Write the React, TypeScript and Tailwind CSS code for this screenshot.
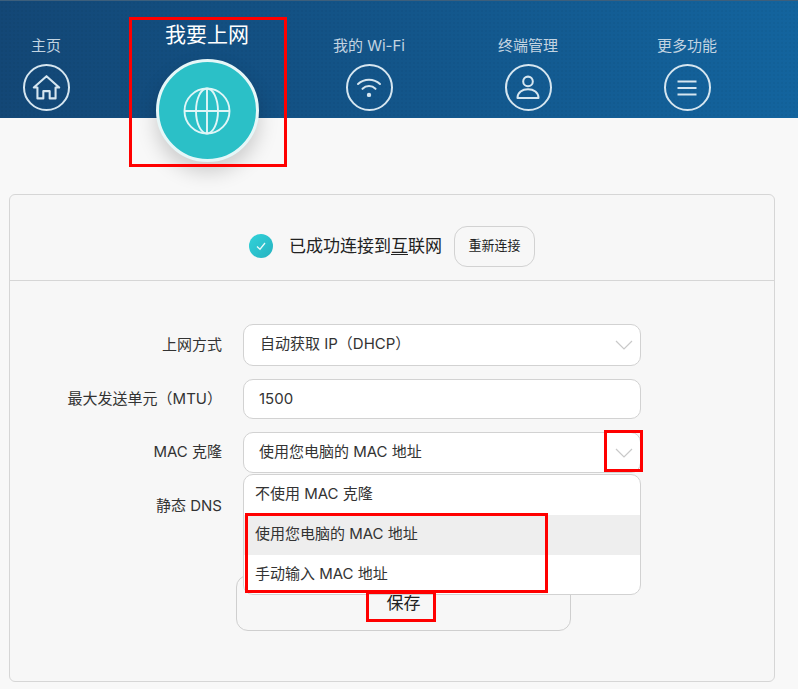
import React from "react";

const stroke = "#d6e6f0";

function HomeIcon() {
  return (
    <svg viewBox="0 0 32 32" className="w-[29px] h-[29px]" fill="none" stroke={stroke} strokeWidth="2.3" strokeLinejoin="round" strokeLinecap="round">
      <path d="M2 16 L16 3.5 L30 16 L26 16 V28 H19.5 V20 H12.5 V28 H6 V16 Z" />
    </svg>
  );
}
function WifiIcon() {
  return (
    <svg viewBox="0 0 32 32" className="w-[26px] h-[26px]" fill="none" stroke={stroke} strokeWidth="2.5" strokeLinecap="round">
      <path d="M2.5 11 C10 4 22 4 29.5 11" />
      <path d="M8 17 C12.5 12.5 19.5 12.5 24 17" />
      <circle cx="16" cy="24.5" r="2.7" fill={stroke} stroke="none" />
    </svg>
  );
}
function UserIcon() {
  return (
    <svg viewBox="0 0 32 32" className="w-[28px] h-[28px]" fill="none" stroke={stroke} strokeWidth="2.3">
      <circle cx="16" cy="8.5" r="5.5" />
      <path d="M4 27.5 C4 21 9.5 17.5 16 17.5 C22.5 17.5 28 21 28 27.5 Z" strokeLinejoin="round" />
    </svg>
  );
}
function MenuIcon() {
  return (
    <svg viewBox="0 0 20 20" className="w-[20px] h-[20px]" fill="none" stroke={stroke} strokeWidth="2">
      <path d="M0.5 3.5 H19.5 M0.5 10 H19.5 M0.5 16.5 H19.5" />
    </svg>
  );
}
function GlobeIcon() {
  return (
    <svg viewBox="0 0 48 48" className="w-[48px] h-[48px]" fill="none" stroke="#e0f6f7" strokeWidth="1.9">
      <circle cx="24" cy="24" r="22.5" />
      <ellipse cx="24" cy="24" rx="11" ry="22.5" />
      <path d="M24 1.5 V46.5 M1.5 24 H46.5" />
    </svg>
  );
}
function Chevron() {
  return (
    <svg viewBox="0 0 18 10" className="w-[18px] h-[10px]" fill="none" stroke="#c9c9c9" strokeWidth="1.2">
      <path d="M1 1 L9 9 L17 1" />
    </svg>
  );
}

function Row({ label, children }: { label: string; children: React.ReactNode }) {
  return (
    <div className="flex items-center">
      <div className="w-[212px] text-right text-[15px] leading-[20px] pb-[1px] text-[#333] whitespace-nowrap">{label}</div>
      <div className="ml-[21px] w-[398px]">{children}</div>
    </div>
  );
}

const fieldBase = "w-full bg-white border border-[#d2d2d2] rounded-[10px] flex items-center justify-between text-[15px] text-[#333]";
const ring = "mt-[8px] w-[47px] h-[47px] rounded-full border-2 border-[#d6e6f0] flex items-center justify-center";

export default function App() {
  return (
    <div className="relative w-[798px] h-[689px] overflow-hidden bg-[#f8f8f8] font-['Inter','Noto_Sans_CJK_SC',sans-serif]">
      <header className="relative h-[118px] flex border-t border-[#3d5f7c] [background-image:radial-gradient(rgba(0,0,0,0.03)_1px,transparent_1px),linear-gradient(to_right,#134776,#13649e)] [background-size:4px_4px,100%_100%]">
        <div className="w-[92px] flex flex-col items-center pt-[35px]">
          <div className="text-[15px] leading-[20px] text-[#c3d4e1]">主页</div>
          <div className={ring}><HomeIcon /></div>
        </div>
        <div className="ml-[63px] w-[104px] flex flex-col items-center pt-[20px]">
          <div className="text-[21px] leading-[28px] text-white whitespace-nowrap">我要上网</div>
          <div className="mt-[10px] shrink-0 w-[103px] h-[103px] rounded-full bg-[#2bc0c7] border-[3px] border-[#e6f7f8] flex items-center justify-center shadow-[0_10px_20px_rgba(0,0,0,0.18)]">
            <GlobeIcon />
          </div>
        </div>
        <div className="ml-[58px] w-[104px] flex flex-col items-center pt-[35px]">
          <div className="text-[15px] leading-[20px] text-[#c3d4e1] whitespace-nowrap">我的 Wi-Fi</div>
          <div className={ring}><WifiIcon /></div>
        </div>
        <div className="ml-[55px] w-[104px] flex flex-col items-center pt-[35px]">
          <div className="text-[15px] leading-[20px] text-[#c3d4e1] whitespace-nowrap">终端管理</div>
          <div className={ring}><UserIcon /></div>
        </div>
        <div className="ml-[55px] w-[104px] flex flex-col items-center pt-[35px]">
          <div className="text-[15px] leading-[20px] text-[#c3d4e1] whitespace-nowrap">更多功能</div>
          <div className={ring}><MenuIcon /></div>
        </div>
      </header>

      <main className="pt-[76px] pl-[9px]">
        <section className="w-[766px] h-[488px] border border-[#d6d6d6] rounded-[6px] bg-[#f7f7f7]">
          <div className="h-[86px] border-b border-[#d6d6d6] flex items-center justify-center pt-[25px] pb-[8px]">
            <div className="w-[24px] h-[24px] rounded-full bg-gradient-to-br from-[#31d3da] to-[#27b2c0] flex items-center justify-center">
              <svg viewBox="0 0 12 12" className="w-[12px] h-[12px]" fill="none" stroke="#e8fafa" strokeWidth="1.3"><path d="M2 6.5 L5 9.2 L10 3" /></svg>
            </div>
            <div className="ml-[16px] text-[17px] leading-[24px] text-[#222] whitespace-nowrap">已成功连接到<span className="underline underline-offset-2">互</span>联网</div>
            <button className="ml-[12px] w-[81px] h-[41px] border border-[#d2d2d2] rounded-[13px] text-[13px] text-[#222]">重新连接</button>
          </div>

          <div className="pt-[43px] flex flex-col gap-[13px]">
            <Row label="上网方式">
              <div className={`${fieldBase} h-[42px] pl-[16px] pr-[7px]`}>
                <span className="pb-[1px]">自动获取 IP（DHCP）</span>
                <Chevron />
              </div>
            </Row>
            <Row label="最大发送单元（MTU）">
              <div className={`${fieldBase} h-[40px] pl-[15px]`}>1500</div>
            </Row>
            <Row label="MAC 克隆">
              <div className={`${fieldBase} h-[41px] pl-[15px] pr-[7px]`}>
                <span className="pb-[1px]">使用您电脑的 MAC 地址</span>
                <Chevron />
              </div>
            </Row>
            <Row label="静态 DNS">
              <div className={`${fieldBase} h-[40px]`} />
            </Row>
          </div>
          <button className="mt-[49px] ml-[226px] w-[335px] h-[56px] border border-[#cfcfcf] rounded-[12px] text-[17px] text-[#222] pt-[2px]">保存</button>
        </section>
      </main>

      <div className="absolute left-[243px] top-[474px] w-[398px] h-[121px] bg-white border border-[#d2d2d2] rounded-[10px] overflow-hidden text-[15px] text-[#333]">
        <div className="h-[40px] flex items-center pl-[11px] pb-[1px]">不使用 MAC 克隆</div>
        <div className="h-[40px] flex items-center pl-[11px] pb-[1px] bg-[#eeeeee]">使用您电脑的 MAC 地址</div>
        <div className="h-[40px] flex items-center pl-[11px] pb-[1px]">手动输入 MAC 地址</div>
      </div>

      <div className="absolute left-[129px] top-[17px] w-[158px] h-[150px] border-[3px] border-[#f00]" />
      <div className="absolute left-[604px] top-[430px] w-[39px] h-[42px] border-[3px] border-[#f00]" />
      <div className="absolute left-[245px] top-[513px] w-[303px] h-[80px] border-[3px] border-[#f00]" />
      <div className="absolute left-[366px] top-[591px] w-[70px] h-[31px] border-[3px] border-[#f00]" />
    </div>
  );
}
